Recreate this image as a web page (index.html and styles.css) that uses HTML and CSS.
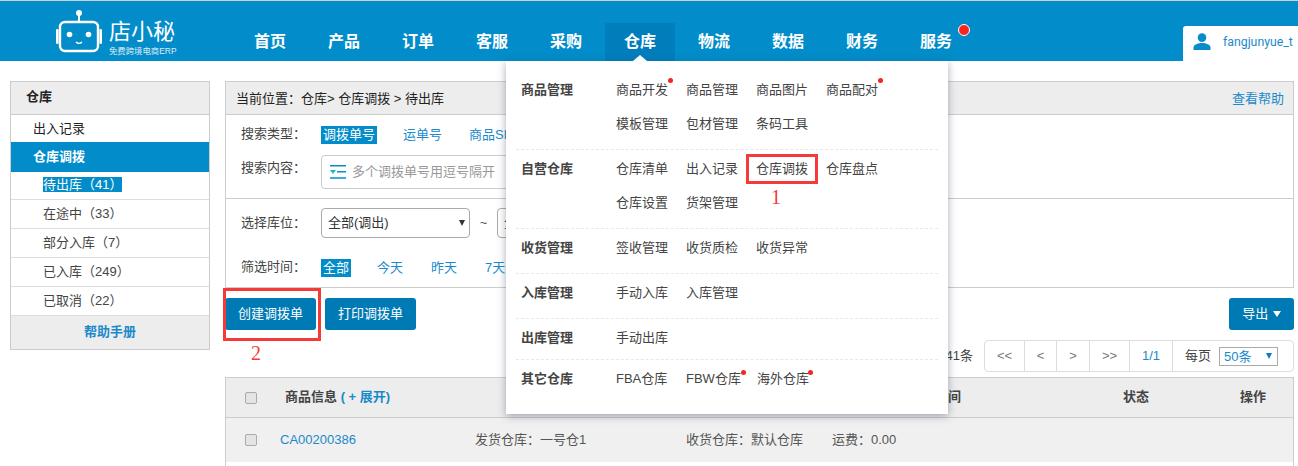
FILE: index.html
```html
<!DOCTYPE html>
<html lang="zh-CN">
<head>
<meta charset="utf-8">
<title>仓库调拨</title>
<link rel="stylesheet" href="styles.css">
</head>
<body>
<header class="topbar">
  <a class="logo">
    <svg class="logo-mark" width="48" height="44" viewBox="0 0 48 44" fill="none">
      <circle cx="23" cy="4" r="3" fill="#fff"/>
      <path d="M23 6v7" stroke="#fff" stroke-width="2"/>
      <rect x="4" y="13" width="38" height="29" rx="5" stroke="#fff" stroke-width="2.4"/>
      <rect x="0" y="20" width="2.6" height="15" rx="1.2" fill="#fff"/>
      <rect x="43.4" y="20" width="2.6" height="15" rx="1.2" fill="#fff"/>
      <circle cx="13.5" cy="25.5" r="2.8" fill="#fff"/>
      <circle cx="32.5" cy="25.5" r="2.8" fill="#fff"/>
      <path d="M20 33c1.6 1.8 4.4 1.8 6 0" stroke="#fff" stroke-width="1.3"/>
    </svg>
    <span class="logo-text">
      <span class="logo-name">店小秘</span>
      <span class="logo-sub">免费跨境电商ERP</span>
    </span>
  </a>
  <nav class="nav">
    <a class="nav-item">首页</a>
    <a class="nav-item">产品</a>
    <a class="nav-item">订单</a>
    <a class="nav-item">客服</a>
    <a class="nav-item">采购</a>
    <a class="nav-item nav-item-active">仓库</a>
    <a class="nav-item">物流</a>
    <a class="nav-item">数据</a>
    <a class="nav-item">财务</a>
    <a class="nav-item">服务<i class="nav-dot"></i></a>
  </nav>
  <div class="user">
    <svg class="user-icon" width="18" height="17" viewBox="0 0 18 17" fill="#0a8ccb"><circle cx="9" cy="4.6" r="4.3"/><path d="M0.5 17v-2.4c0-3 4.6-4.6 8.500-4.600s8.500 1.600 8.500 4.600V17z"/></svg>
    <span class="user-name">fangjunyue_t</span>
  </div>

  <div class="menu">
    <i class="menu-caret"></i>
    <section class="menu-sec">
      <h4 class="menu-title">商品管理</h4>
      <div class="menu-links">
        <a class="menu-link">商品开发<i class="mini-dot"></i></a><a class="menu-link">商品管理</a><a class="menu-link">商品图片</a><a class="menu-link">商品配对<i class="mini-dot"></i></a>
        <a class="menu-link">模板管理</a><a class="menu-link">包材管理</a><a class="menu-link">条码工具</a>
      </div>
    </section>
    <section class="menu-sec">
      <h4 class="menu-title">自营仓库</h4>
      <div class="menu-links">
        <a class="menu-link">仓库清单</a><a class="menu-link">出入记录</a><a class="menu-link">仓库调拨<i class="mark mark-one"></i><b class="mark-num mark-num-one">1</b></a><a class="menu-link">仓库盘点</a>
        <a class="menu-link">仓库设置</a><a class="menu-link">货架管理</a>
      </div>
    </section>
    <section class="menu-sec">
      <h4 class="menu-title">收货管理</h4>
      <div class="menu-links"><a class="menu-link">签收管理</a><a class="menu-link">收货质检</a><a class="menu-link">收货异常</a></div>
    </section>
    <section class="menu-sec">
      <h4 class="menu-title">入库管理</h4>
      <div class="menu-links"><a class="menu-link">手动入库</a><a class="menu-link">入库管理</a></div>
    </section>
    <section class="menu-sec menu-sec-short">
      <h4 class="menu-title">出库管理</h4>
      <div class="menu-links"><a class="menu-link">手动出库</a></div>
    </section>
    <section class="menu-sec menu-sec-last">
      <h4 class="menu-title">其它仓库</h4>
      <div class="menu-links"><a class="menu-link">FBA仓库</a><a class="menu-link">FBW仓库<i class="mini-dot mini-dot-fbw"></i></a><a class="menu-link menu-link-sea">海外仓库<i class="mini-dot mini-dot-sea"></i></a></div>
    </section>
  </div>
</header>

<div class="page">
  <aside class="side">
    <div class="side-head">仓库</div>
    <a class="side-link">出入记录</a>
    <a class="side-link side-link-active">仓库调拨</a>
    <a class="side-sub side-sub-first"><span class="selected">待出库（41）</span></a>
    <a class="side-sub">在途中（33）</a>
    <a class="side-sub">部分入库（7）</a>
    <a class="side-sub">已入库（249）</a>
    <a class="side-sub">已取消（22）</a>
    <a class="side-foot">帮助手册</a>
  </aside>

  <main class="main">
    <div class="panel">
      <div class="crumb">
        <span>当前位置：仓库&gt; 仓库调拨 &gt; 待出库</span>
        <a class="link">查看帮助</a>
      </div>
      <div class="search">
        <div class="opt-row opt-row-type">
          <span class="opt-label">搜索类型：</span>
          <a class="opt opt-on">调拨单号</a>
          <a class="opt opt-a">运单号</a>
          <a class="opt">商品SKU</a>
        </div>
        <div class="opt-row opt-row-input">
          <span class="opt-label">搜索内容：</span>
          <div class="input">
            <svg width="16" height="14" viewBox="0 0 16 14"><path d="M0 .8h16M7 6.800h9M0 13h16" stroke="#0a8ccb" stroke-width="1.600"/><path d="M0 5h6L3 9z" fill="#19b5c9"/></svg>
            <span>多个调拨单号用逗号隔开</span>
          </div>
        </div>
      </div>
      <div class="filter">
        <div class="opt-row opt-row-select">
          <span class="opt-label">选择库位：</span>
          <span class="select-wrap"><select class="select"><option>全部(调出)</option></select></span>
          <span class="tilde">~</span>
          <span class="select-wrap"><select class="select"><option>全部(调入)</option></select></span>
        </div>
        <div class="opt-row opt-row-time">
          <span class="opt-label">筛选时间：</span>
          <a class="opt opt-on opt-time">全部</a>
          <a class="opt opt-b">今天</a>
          <a class="opt opt-b">昨天</a>
          <a class="opt">7天内</a>
        </div>
      </div>
    </div>

    <div class="actions">
      <div class="actions-left">
        <a class="btn btn-marked">创建调拨单<i class="mark mark-two"></i><b class="mark-num mark-num-two">2</b></a>
        <a class="btn">打印调拨单</a>
      </div>
      <a class="btn btn-export">导出 <i class="caret"></i></a>
    </div>

    <div class="pager-row">
      <span class="total">共41条</span>
      <div class="pager">
        <a class="pg pg-1">&lt;&lt;</a>
        <a class="pg pg-2">&lt;</a>
        <a class="pg pg-3">&gt;</a>
        <a class="pg pg-4">&gt;&gt;</a>
        <a class="pg pg-5">1/1</a>
        <div class="pg-size">每页<span class="select-wrap select-wrap-blue"><span class="pg-select">50条</span></span></div>
      </div>
    </div>

    <div class="table">
      <div class="thead">
        <span class="check"></span>
        <span class="th th-goods">商品信息 <em class="expand">( + 展开)</em></span>
        <span class="th th-time">创建时间</span>
        <span class="th th-state">状态</span>
        <span class="th th-op">操作</span>
      </div>
      <div class="trow">
        <span class="check"></span>
        <a class="td-no">CA00200386</a>
        <span class="td-from">发货仓库：一号仓1</span>
        <span class="td-to">收货仓库：默认仓库</span>
        <span class="td-fee">运费：0.00</span>
      </div>
      <div class="tbody-rest"></div>
    </div>
  </main>
</div>
</body>
</html>
```

FILE: styles.css
```css
* { box-sizing: border-box; }
html, body { margin: 0; height: 466px; overflow: hidden; }
body {
  background: #fff;
  color: #333;
  font: 13px/1.4 "Liberation Sans", "Noto Sans CJK SC", sans-serif;
}
a { text-decoration: none; color: inherit; }
h4 { margin: 0; }

/* top bar */
.topbar {
  position: relative;
  display: flex;
  height: 61px;
  background: #028dca;
  border-top: 1px solid #c8d4da;
  z-index: 2;
}
.logo {
  display: flex;
  align-items: flex-start;
  width: 235px;
  padding: 8px 0 0 56px;
  color: #fff;
}
.logo-mark { flex: none; }
.logo-text { display: flex; flex-direction: column; margin-left: 5px; padding-top: 9px; }
.logo-name { font-size: 22px; line-height: 28px; width: 68px; font-weight: 400; }
.logo-sub { font-size: 8.400px; line-height: 12px; white-space: nowrap; opacity: .85; margin-top: -1px; }
.nav { display: flex; gap: 4px; padding-top: 22px; }
.nav-item {
  position: relative;
  width: 70px;
  height: 38px;
  line-height: 37px;
  text-align: center;
  font-size: 16px;
  font-weight: 700;
  color: #fff;
}
.nav-item-active { background: #007ebb; border-radius: 2px 2px 0 0; }
.nav-dot {
  position: absolute;
  left: 57px;
  top: 1px;
  width: 12px;
  height: 12px;
  border-radius: 50%;
  background: #f8251f;
  border: 1px solid #fff;
}
.user {
  display: flex;
  align-items: center;
  flex: none;
  width: 115px;
  height: 35px;
  margin: 25px 0 0 auto;
  padding: 0 0 4px 10px;
  background: #fff;
  border-radius: 3px 0 0 0;
  color: #1a8acb;
  font: 12.300px/16px Roboto, sans-serif;
  white-space: nowrap;
}
.user-icon { flex: none; }
.user-name { margin-left: 12px; }

/* dropdown */
.menu {
  position: absolute;
  left: 506px;
  top: 60px;
  width: 442px;
  height: 353px;
  padding-top: 10px;
  background: #fff;
  box-shadow: 0 2px 8px rgba(60, 70, 95, .45);
  color: #444;
}
.menu-caret {
  position: absolute;
  left: 127px;
  top: -6px;
  width: 0;
  height: 0;
  border: 7px solid transparent;
  border-top: 0;
  border-bottom: 6px solid #fff;
}
.menu-sec {
  display: flex;
  margin: 0 10px;
  padding: 2px 0 8px 5px;
  border-bottom: 1px dashed #e8e8e8;
}
.menu-sec-short { padding-bottom: 4px; }
.menu-sec-last { border-bottom: 0; }
.menu-title { width: 95px; height: 34px; flex: none; font-size: 13px; line-height: 34px; font-weight: 700; color: #444; }
.menu-links { display: flex; flex-wrap: wrap; width: 280px; }
.menu-link { position: relative; width: 70px; height: 34px; line-height: 34px; white-space: nowrap; }
.menu-link-sea { padding-left: 1px; }
.mini-dot {
  position: absolute;
  left: 52px;
  top: 5px;
  width: 5px;
  height: 5px;
  border-radius: 50%;
  background: #f8251f;
}
.mini-dot-fbw { left: 55px; top: 8px; }
.mini-dot-sea { left: 52px; top: 8px; }
.mark { position: absolute; border: 3px solid #f53a3a; pointer-events: none; }
.mark-one { left: -10px; top: 2px; width: 72px; height: 30px; }
.mark-two { left: -2px; top: -10px; width: 98px; height: 53px; }
.mark-num {
  position: absolute;
  color: #f53a3a;
  font: 400 20px/22px "Liberation Serif", serif;
}
.mark-num-one { left: 15px; top: 34px; }
.mark-num-two { left: 26px; top: 44px; }

/* page */
.page {
  display: grid;
  grid-template-columns: 200px 1069px;
  column-gap: 15px;
  padding: 20px 4px 0 10px;
}

/* sidebar */
.side {
  display: flex;
  flex-direction: column;
  height: 269px;
  border: 1px solid #ccc;
}
.side-head {
  height: 33px;
  padding-left: 15px;
  line-height: 30px;
  font-weight: 700;
  color: #222;
  background: #ededed;
  border-bottom: 1px solid #ccc;
}
.side-link { height: 27px; padding-left: 22px; line-height: 27px; color: #222; }
.side-link-active { height: 30px; line-height: 30px; background: #028dca; color: #fff; font-weight: 700; }
.side-sub {
  height: 29px;
  padding-left: 32px;
  line-height: 28px;
  color: #444;
  border-bottom: 1px solid #ddd;
}
.side-sub-first { height: 28px; line-height: 26px; }
.selected { display: inline-block; height: 15px; line-height: 15px; background: #028dca; color: #fff; }
.side-foot {
  flex: 1;
  text-align: center;
  line-height: 32px;
  font-weight: 700;
  color: #1a8acb;
  background: #ededed;
}

/* main */
.main { min-width: 0; }
.panel { border: 1px solid #ccc; height: 207px; }
.crumb {
  display: flex;
  justify-content: space-between;
  height: 33px;
  padding: 0 9px 0 10px;
  line-height: 33px;
  background: #ededed;
  border-bottom: 1px solid #ccc;
  color: #222;
}
.link { color: #1a8acb; }
.search { height: 84px; border-bottom: 1px solid #ccc; }
.opt-row { display: flex; align-items: center; padding-left: 15px; }
.opt-row-type { padding-top: 10px; height: 29px; }
.opt-row-input { padding-top: 11px; align-items: flex-start; }
.opt-row-select { padding-top: 9px; height: 39px; }
.opt-row-time { padding-top: 20px; height: 39px; }
.opt-label { width: 80px; flex: none; color: #444; }
.opt { color: #1a8acb; line-height: 18px; white-space: nowrap; }
.opt-on { padding: 0 2px; background: #028dca; color: #fff; margin-right: 26px; }
.opt-a { margin-right: 27px; }
.opt-b { width: 54px; }
.opt-time { width: 30px; }
.opt-row-input .opt-label { line-height: 26px; }
.input {
  display: flex;
  align-items: center;
  gap: 6px;
  width: 260px;
  height: 34px;
  padding-left: 8px;
  border: 1px solid #ccc;
  border-radius: 4px;
  color: #999;
}
.select-wrap { position: relative; display: block; flex: none; }
.select-wrap::after {
  content: "";
  position: absolute;
  right: 5px;
  top: 12px;
  width: 0;
  height: 0;
  border: 3.500px solid transparent;
  border-bottom: 0;
  border-top: 6px solid #333;
  pointer-events: none;
}
.select-wrap-blue::after { right: 6px; top: 6px; border-top-color: #0a7cc0; }
.select {
  display: block;
  width: 149px;
  height: 30px;
  padding-left: 6px;
  appearance: none;
  background: #fff;
  border: 1px solid #aaa;
  border-radius: 4px;
  color: #333;
  font: inherit;
}
.tilde { width: 27px; text-align: center; color: #555; }

/* actions */
.actions { display: flex; justify-content: space-between; margin-top: 10px; }
.actions-left { display: flex; gap: 9px; }
.btn {
  position: relative;
  display: block;
  width: 91px;
  height: 32px;
  line-height: 31px;
  text-align: center;
  background: #007ab5;
  border-radius: 3px;
  color: #fff;
}
.btn-export { width: 65px; }
.caret {
  display: inline-block;
  width: 0;
  height: 0;
  margin-left: 1px;
  vertical-align: 1px;
  border: 4px solid transparent;
  border-bottom: 0;
  border-top: 6px solid #fff;
}

/* pager */
.pager-row { display: flex; justify-content: flex-end; align-items: center; margin-top: 10px; color: #444; }
.total { margin-right: 11px; }
.pager {
  display: flex;
  width: 310px;
  height: 32px;
  border: 1px solid #ddd;
  border-radius: 4px;
  line-height: 30px;
  color: #777;
}
.pg { text-align: center; border-right: 1px solid #ddd; }
.pg-1 { width: 40px; }
.pg-2 { width: 32px; }
.pg-3 { width: 33px; }
.pg-4 { width: 40px; }
.pg-5 { width: 43px; color: #1a8acb; }
.pg-size { display: flex; align-items: center; gap: 8px; padding-left: 12px; color: #444; white-space: nowrap; }
.pg-select {
  display: block;
  width: 59px;
  height: 19px;
  padding-left: 4px;
  line-height: 18px;
  background: #fff;
  border: 1px solid #aaa;
  color: #1a8acb;
}

/* table */
.table { margin-top: 5px; }
.thead {
  display: grid;
  grid-template-columns: 40px 624px 214px 117px 1fr;
  align-items: center;
  height: 41px;
  padding-left: 19px;
  background: #ededed;
  border: 1px solid #ccc;
  color: #444;
  font-weight: 700;
}
.expand { color: #1a8acb; font-style: normal; }
.trow {
  display: grid;
  grid-template-columns: 35px 195px 211px 146px 1fr;
  align-items: center;
  height: 44px;
  padding-left: 19px;
  background: #f0f0f0;
  border-right: 1px solid #ccc;
  border-left: 1px solid #ccc;
  color: #555;
}
.check {
  display: block;
  width: 12px;
  height: 12px;
  background: #e4e4e4;
  border: 1px solid #aaa;
  border-radius: 2px;
}
.td-no { color: #1a8acb; }
.tbody-rest {
  height: 10px;
  border-right: 1px solid #ccc;
  border-left: 1px solid #ccc;
}
```
